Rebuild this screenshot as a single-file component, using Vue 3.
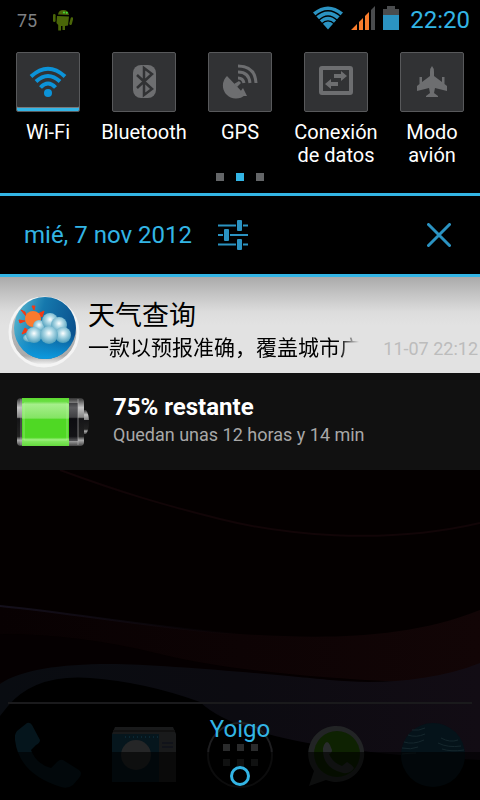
<template>
  <main class="screen">
    <header class="status-bar">
      <span class="battery-level">75</span>
      <svg class="droid" width="20" height="22" viewBox="0 0 20 22">
        <g fill="#4a6608">
          <path d="M5 5.5C5.4 2.4 7.3 1 10.5 1S15.5 2.4 16 6Z" />
          <path d="M4 7l12 .5-1 9-3 .5v4H9.5v-4H8v4.5H5.2V16L3.5 14Z" />
          <rect x="0" y="5" width="2.6" height="8" rx="1.3" />
          <rect x="17.2" y="8" width="2.6" height="8" rx="1.3" transform="rotate(14 18 11)" />
        </g>
        <circle cx="11" cy="3.5" r="1" fill="#3fe03f" />
        <circle cx="13.8" cy="3.8" r="1" fill="#3fe03f" />
      </svg>
      <div class="status-icons">
        <svg width="30" height="24" viewBox="0 0 30 24">
          <path d="M0 6.5Q15-5.500 30 6.5L15 23.500Z" fill="#2b93c2" />
          <path d="M2 10.500Q15-1 28 10.500M5.500 14.500Q15 5.500 24.500 14.500M8.500 18Q15 11.500 21.500 18" fill="none" stroke="#000" stroke-width="1.200" />
        </svg>
        <svg width="24" height="24" viewBox="0 0 24 24">
          <path d="M0 24L6 18v6ZM8 16l4-4v12H8ZM14 10l4-4v18h-4Z" fill="#fb7d2c" />
          <path d="M20 4l4-4v24h-4Z" fill="#4a4c4e" />
        </svg>
        <svg width="16" height="24" viewBox="0 0 16 24">
          <path d="M4 0h8v3h4v6H0V3h4Z" fill="#4a4c4e" />
          <path d="M0 9h16v15H0Z" fill="#2b93c2" />
        </svg>
      </div>
      <time class="clock">22:20</time>
    </header>

    <section class="toggles">
      <div class="toggle-row">
        <button
          v-for="item in toggles"
          :key="item.id"
          type="button"
          class="toggle"
          :class="{ active: item.active }"
          :aria-pressed="item.active"
          @click="item.active = !item.active"
        >
          <span class="tile">
            <svg v-if="item.id === 'wifi'" width="48" height="48" viewBox="0 0 48 48">
              <circle cx="24" cy="35" r="4" fill="currentColor" />
              <path d="M7 18.500Q24 3 41 18.500M12 23.500Q24 12.500 36 23.500M16.500 29.500Q24 21.500 31.500 29.500" fill="none" stroke="currentColor" stroke-width="4" />
            </svg>
            <svg v-else-if="item.id === 'bluetooth'" width="48" height="48" viewBox="0 0 48 48">
              <rect x="13" y="7" width="23" height="33" rx="8" fill="currentColor" />
              <path d="M17 17l15 14-8 6V10l8 6-15 14" fill="none" stroke="#313234" stroke-width="2.500" />
            </svg>
            <svg v-else-if="item.id === 'gps'" width="48" height="48" viewBox="0 0 48 48">
              <path d="M11 18A13 13 0 0 0 29 37Z" fill="currentColor" />
              <path d="M18 26l5-3 2 2-4 4ZM27 30l4 8H21Z" fill="currentColor" />
              <g fill="none" stroke="currentColor" stroke-width="3">
                <path d="M22 8Q39 8 40 25" />
                <path d="M22 14Q33 14 34 25" />
                <path d="M22 20Q27 20 28 25" />
              </g>
            </svg>
            <svg v-else-if="item.id === 'data'" width="48" height="48" viewBox="0 0 48 48">
              <rect x="9" y="10" width="30" height="25" rx="1" fill="none" stroke="currentColor" stroke-width="4" />
              <path d="M22 16h7v-3l6 5-6 5v-3h-7ZM26 24h-7v-3l-6 5 6 5v-3h7Z" fill="currentColor" />
            </svg>
            <svg v-else width="48" height="48" viewBox="0 0 48 48">
              <path d="M24 8q2 2 2 6v4l8 6v-5h2.500v7l2.500 2v5l-12-3-1 5 4 3v1H18v-1l4-3-1-5-12 3v-5l2.500-2v-7H14v5l8-6v-4q0-4 2-6Z" fill="currentColor" />
            </svg>
          </span>
          <span class="toggle-label">{{ item.label }}</span>
        </button>
      </div>
      <div class="pager">
        <span v-for="n in 3" :key="n" class="page-dot" :class="{ current: n === 2 }"></span>
      </div>
    </section>

    <section class="date-bar">
      <h1 class="date">mié, 7 nov 2012</h1>
      <button type="button" class="icon-button" aria-label="Ajustes">
        <svg width="30" height="30" viewBox="0 0 30 30" fill="#2b93c2">
          <path d="M0 4.500h18v2H0ZM25 4.500h5v2h-5ZM0 14h5v2H0ZM12 14h18v2H12ZM0 23.500h18v2H0ZM25 23.500h5v2h-5Z" />
          <rect x="19" y="0" width="5" height="11" rx="1" />
          <rect x="6" y="9" width="5" height="12" rx="1" />
          <rect x="19" y="19" width="5" height="11" rx="1" />
        </svg>
      </button>
      <button type="button" class="icon-button clear" aria-label="Borrar">
        <svg width="24" height="24" viewBox="0 0 24 24">
          <path d="M1.500 1.500l21 21M22.500 1.500l-21 21" stroke="#2b93c2" stroke-width="3" stroke-linecap="round" />
        </svg>
      </button>
    </section>

    <article class="notification weather">
      <svg class="weather-icon" width="72" height="72" viewBox="0 0 72 72">
        <defs>
          <linearGradient id="globe" x1="0" y1=".3" x2="1" y2=".6">
            <stop offset="0" stop-color="#55b5d0" />
            <stop offset=".4" stop-color="#1578ad" />
            <stop offset="1" stop-color="#0a4f8c" />
          </linearGradient>
          <linearGradient id="globe-low" x1="0" y1="0" x2="0" y2="1">
            <stop offset=".6" stop-color="#0d9be0" stop-opacity="0" />
            <stop offset="1" stop-color="#0d9be0" />
          </linearGradient>
          <linearGradient id="rim" x1="0" y1="0" x2="0" y2="1">
            <stop offset="0" stop-color="#ccc" />
            <stop offset=".85" stop-color="#aaa" />
            <stop offset="1" stop-color="#fff" />
          </linearGradient>
          <radialGradient id="puff" cx=".5" cy=".4" r=".6">
            <stop offset="0" stop-color="#fff" />
            <stop offset=".35" stop-color="#b5dce8" />
            <stop offset="1" stop-color="#4b9dbb" />
          </radialGradient>
        </defs>
        <circle cx="36" cy="36" r="34" fill="url(#rim)" stroke="#f4f4f4" stroke-width="3" />
        <circle cx="37" cy="32" r="31" fill="url(#globe)" />
        <circle cx="37" cy="32" r="31" fill="url(#globe-low)" />
        <path d="M24 10l2 4 1-4ZM13 14l4 2 1 4ZM36 15l-2 6-4-3ZM11 24l6 1-5 2ZM14 38l3-6 4 3Z" fill="#f23a16" stroke="#f23a16" />
        <circle cx="25" cy="23" r="8" fill="#fb7a2e" />
        <g fill="url(#puff)">
          <circle cx="31" cy="30" r="6" />
          <circle cx="42" cy="25" r="8" />
          <circle cx="51" cy="29" r="8" />
          <ellipse cx="21" cy="42" rx="6" ry="4" />
          <circle cx="26" cy="39" r="8" />
          <circle cx="55" cy="39" r="8" />
          <circle cx="41" cy="39" r="9" />
        </g>
      </svg>
      <div class="weather-body">
        <h2 class="weather-title">天气查询</h2>
        <div class="weather-line">
          <p class="weather-text">一款以预报准确，覆盖城市广</p>
          <time class="weather-time">11-07 22:12</time>
        </div>
      </div>
    </article>

    <article class="notification battery">
      <svg class="battery-icon" width="72" height="48" viewBox="0 0 72 48">
        <defs>
          <linearGradient id="metal" x1="0" y1="0" x2="0" y2="1">
            <stop offset="0" stop-color="#333" />
            <stop offset=".2" stop-color="#c4c4c4" />
            <stop offset=".4" stop-color="#858585" />
            <stop offset=".43" stop-color="#151517" />
            <stop offset=".8" stop-color="#222" />
            <stop offset=".88" stop-color="#aaa" />
            <stop offset="1" stop-color="#444" />
          </linearGradient>
          <linearGradient id="charge" x1="0" y1="0" x2="0" y2="1">
            <stop offset="0" stop-color="#5ddb30" />
            <stop offset=".1" stop-color="#6fe04b" />
            <stop offset=".13" stop-color="#a6ef8c" />
            <stop offset=".42" stop-color="#83e463" />
            <stop offset=".44" stop-color="#4fd824" />
            <stop offset=".82" stop-color="#4fd824" />
            <stop offset=".86" stop-color="#8ceb6b" />
            <stop offset="1" stop-color="#64d93d" />
          </linearGradient>
        </defs>
        <path d="M66 12h3q3 4 3 12t-3 12h-3Z" fill="url(#metal)" />
        <rect x="0" y="0" width="67" height="48" rx="4" fill="url(#metal)" />
        <rect x="52" y="5" width="9" height="38" fill="#08080c" opacity=".55" />
        <path d="M61 1v46M4 1v46" stroke="#b5b5b5" opacity=".6" />
        <rect x="5" y="0" width="47" height="48" fill="url(#charge)" />
        <path d="M7 5h43v37H7Z" fill="none" stroke="#b9f5a2" opacity=".5" />
      </svg>
      <div class="battery-body">
        <h2 class="battery-title">75% restante</h2>
        <p class="battery-text">Quedan unas 12 horas y 14 min</p>
      </div>
    </article>

    <section class="home">
      <svg class="wallpaper" viewBox="0 0 480 330" preserveAspectRatio="none">
        <defs>
          <linearGradient id="wave" x1="0" y1="0" x2="1" y2="0">
            <stop offset="0" stop-color="#080102" />
            <stop offset="1" stop-color="#120506" />
          </linearGradient>
          <linearGradient id="mist" x1="0" y1="0" x2="1" y2="0">
            <stop offset="0" stop-color="#090c11" />
            <stop offset=".5" stop-color="#0c0b11" />
            <stop offset="1" stop-color="#120c14" />
          </linearGradient>
          <linearGradient id="ridge" x1="0" y1="0" x2="1" y2="0">
            <stop offset="0" stop-color="#14101c" />
            <stop offset="1" stop-color="#14101c" stop-opacity="0" />
          </linearGradient>
        </defs>
        <path d="M0 0h480v330H0Z" fill="#040000" />
        <path d="M60 0C120 22 160 34 220 49S380 76 480 53" fill="none" stroke="#120507" stroke-width="2" />
        <path d="M0 136C80 144 170 160 240 164S400 172 480 140V330H0Z" fill="url(#wave)" />
        <path d="M0 136C80 144 170 160 240 164" fill="none" stroke="url(#ridge)" stroke-width="2" />
        <path d="M0 164Q80 164 160 184T400 212L0 212Z" fill="#050001" />
        <path d="M0 214C20 200 60 194 110 194S290 206 330 210S430 213 480 193V330H0Z" fill="url(#mist)" />
        <path d="M8 236Q35 204 90 208T200 232Q250 280 480 290V330H0V246Z" fill="#000" />
      </svg>
      <nav class="dock">
        <a href="#" class="dock-link" aria-label="Teléfono">
          <svg width="66" height="66" viewBox="0 0 66 66">
            <path d="M2 9L12 1q3-1 5 2l8 15q0 3-4 5l-5 5q5 14 20 18l6-6q3-3 6-2l16 10q4 3 0 8l-6 7q-5 4-12 2Q4 52 0 18q-1-5 2-9Z" fill="#05151c" />
          </svg>
        </a>
        <a href="#" class="dock-link" aria-label="Contactos">
          <svg width="66" height="66" viewBox="0 0 66 66">
            <path d="M4 5h58l3 7v48H1V12Z" fill="#191a1b" />
            <path d="M1 12h47v48H1Z" fill="#06161d" />
            <path d="M2 9h62" stroke="#111" stroke-width="2" />
            <path d="M14 15h33" stroke="#10394a" stroke-dasharray="1 3" />
            <circle cx="25" cy="33" r="15" fill="#252627" />
            <path d="M51 21h11M51 25h11" stroke="#11131a" stroke-width="2" />
          </svg>
        </a>
        <a href="#" class="dock-link" aria-label="Aplicaciones">
          <svg width="66" height="66" viewBox="0 0 66 66">
            <circle cx="33" cy="33" r="32" fill="none" stroke="#1e1e20" stroke-width="2" />
            <path d="M16 22h7v7h-7ZM30 22h7v7h-7ZM44 22h7v7h-7ZM16 37h7v7h-7ZM30 37h7v7h-7ZM44 37h7v7h-7Z" fill="#2a2b2c" />
          </svg>
        </a>
        <a href="#" class="dock-link" aria-label="WhatsApp">
          <svg width="66" height="66" viewBox="0 0 66 66">
            <path d="M6 64l5-15A28 28 0 1 1 23 58Z" fill="#222425" />
            <circle cx="34" cy="32" r="23" fill="#0e2202" />
            <path d="M21 23q3-6 6 0l2 5q0 3-3 4 4 9 13 12l5-4q4 2 7 6-3 6-11 5-21-5-20-25Z" fill="#282b2c" />
          </svg>
        </a>
        <a href="#" class="dock-link" aria-label="Navegador">
          <svg width="66" height="66" viewBox="0 0 66 66">
            <circle cx="34" cy="33" r="32" fill="#05131a" />
            <path d="M9 13q8 3 17-1M5 20q9 3 20-2M3 26q9 2 16-1M42 16q9 5 17 2M39 21q10 5 23 3M43 27q9 3 22 1M13 8q7 1 13-2M3 32q9-1 14-1" fill="none" stroke="#15272d" />
          </svg>
        </a>
      </nav>
      <footer class="handle">
        <p class="carrier">Yoigo</p>
        <div class="grip">
          <svg width="20" height="20" viewBox="0 0 20 20">
            <circle cx="10" cy="10" r="8.500" fill="none" stroke="#33b5e5" stroke-width="3" />
          </svg>
        </div>
      </footer>
    </section>
  </main>
</template>

<script setup>
import { ref } from 'vue';

const toggles = ref([
  { id: 'wifi', label: 'Wi-Fi', active: true },
  { id: 'bluetooth', label: 'Bluetooth', active: false },
  { id: 'gps', label: 'GPS', active: false },
  { id: 'data', label: 'Conexión de datos', active: false },
  { id: 'airplane', label: 'Modo avión', active: false }
]);
</script>

<style>
body {
  background: #000;
}
</style>

<style scoped>
.screen {
  display: flex;
  flex-direction: column;
  min-height: 100vh;
  background: #000;
  color: #fff;
  font-family: Roboto, "Noto Sans CJK SC", sans-serif;
}
.screen svg {
  display: block;
  flex-shrink: 0;
}
h1, h2, p {
  margin: 0;
  font-weight: 400;
}
button {
  padding: 0;
  border: 0;
  background: none;
  color: inherit;
  font: inherit;
  cursor: pointer;
}

/* status bar */
.status-bar {
  display: flex;
  align-items: center;
  height: 40px;
  padding: 0 10px 0 17px;
}
.battery-level {
  color: #7f8184;
  font-size: 18px;
}
.droid {
  margin-left: 16px;
}
.status-icons {
  display: flex;
  gap: 8px;
  margin-left: auto;
  padding-bottom: 4px;
}
.clock {
  margin-left: 11px;
  color: #33b5e5;
  font-size: 24px;
}

/* quick toggles */
.toggles {
  padding: 12px 0;
  border-bottom: 3px solid #33b5e5;
}
.toggle-row {
  display: grid;
  grid-template-columns: repeat(5, 1fr);
}
.toggle {
  display: flex;
  flex-direction: column;
  align-items: center;
  gap: 9px;
}
.tile {
  display: flex;
  align-items: center;
  justify-content: center;
  box-sizing: border-box;
  width: 64px;
  height: 60px;
  border: 1px solid #58595b;
  border-radius: 2px;
  background: #313234;
  color: #6d6e70;
}
.active .tile {
  color: #0c93d8;
  box-shadow: inset 0 -3px #33b5e5, inset 0 -4px #77797b;
}
.toggle-label {
  max-width: 90px;
  font-size: 20px;
  line-height: 23px;
}
.pager {
  display: flex;
  justify-content: center;
  gap: 12px;
  margin-top: 6px;
}
.page-dot {
  width: 8px;
  height: 8px;
  background: #646668;
}
.page-dot.current {
  background: #33b5e5;
}

/* date row */
.date-bar {
  display: flex;
  align-items: center;
  height: 78px;
  padding: 0 29px 0 24px;
  border-bottom: 3px solid #33b5e5;
}
.date {
  color: #33b5e5;
  font-size: 24px;
}
.icon-button {
  margin-left: 26px;
}
.icon-button.clear {
  margin-left: auto;
}

/* notifications */
.notification {
  display: flex;
  align-items: center;
}
.weather {
  height: 96px;
  padding: 0 2px 0 8px;
  background: linear-gradient(#aaa, #c4c4c4 18%, #dcdcdc 36%, #e2e2e2 50%);
  color: #000;
}
.weather-icon {
  margin-top: 14px;
}
.weather-body {
  flex: 1;
  min-width: 0;
  margin-top: 12px;
  margin-left: 8px;
}
.weather-title {
  font-size: 27px;
  line-height: 34px;
}
.weather-line {
  display: flex;
  align-items: center;
  gap: 24px;
}
.weather-text {
  flex: 1;
  min-width: 0;
  overflow: hidden;
  white-space: nowrap;
  font-size: 21px;
  line-height: 30px;
  mask-image: linear-gradient(to left, transparent, #000 20px);
}
.weather-time {
  color: #bcbcbc;
  font-size: 18px;
  white-space: nowrap;
}
.battery {
  height: 97px;
  padding: 0 17px;
  background: #111;
}
.battery-body {
  margin-left: 24px;
}
.battery-title {
  font-size: 24px;
  font-weight: 700;
  line-height: 28px;
}
.battery-text {
  padding-bottom: 2px;
  color: #a8a8a8;
  font-size: 18px;
  line-height: 28px;
}

/* dimmed home screen */
.home {
  position: relative;
  display: flex;
  flex: 1;
  flex-direction: column;
  justify-content: flex-end;
}
.wallpaper {
  position: absolute;
  inset: 0;
  width: 100%;
  height: 100%;
}
.dock {
  position: relative;
  display: grid;
  grid-template-columns: repeat(5, 1fr);
  justify-items: center;
  padding: 20px 0 12px;
  background: linear-gradient(#1a1a1c, #1a1a1c) center top / calc(100% - 16px) 2px no-repeat;
}
.handle {
  position: absolute;
  right: 0;
  bottom: 0;
  left: 0;
}
.carrier {
  padding-bottom: 9px;
  color: #33b5e5;
  font-size: 24px;
  line-height: 28px;
  text-align: center;
}
.grip {
  display: flex;
  justify-content: center;
  padding: 14px 0;
  background: rgba(0, 0, 0, 0.6);
}
</style>
